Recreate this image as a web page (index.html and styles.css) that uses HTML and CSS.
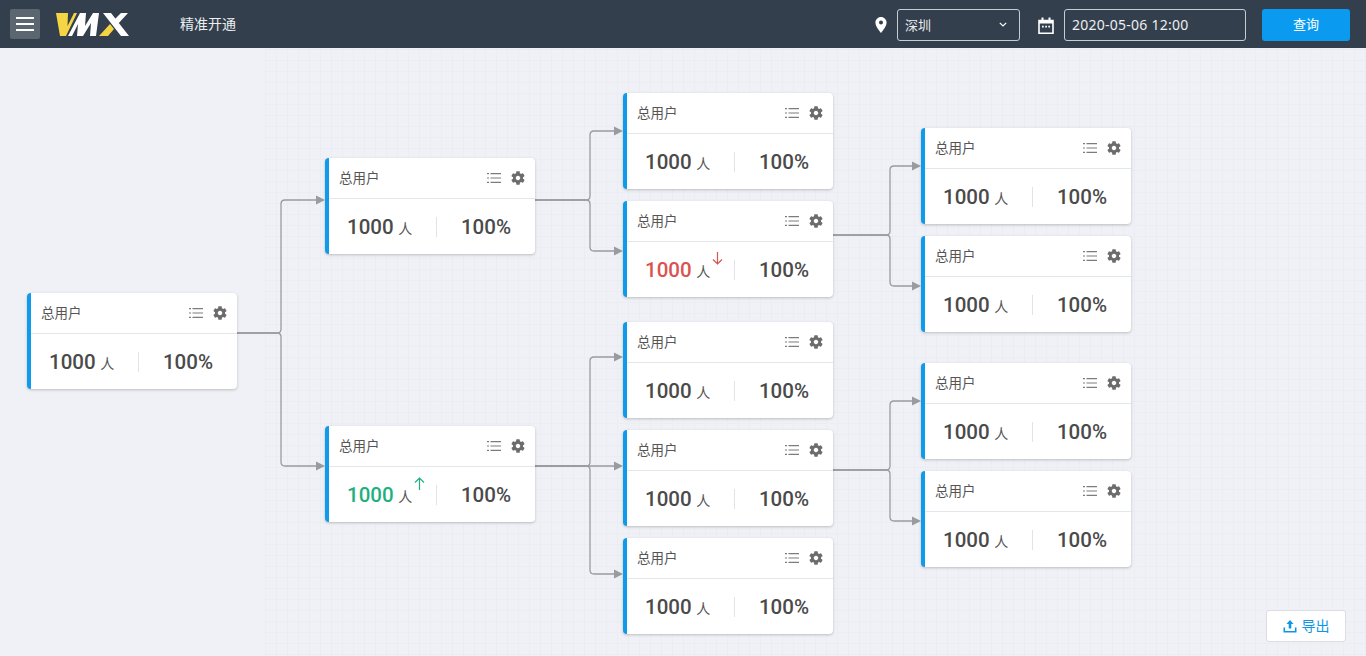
FILE: index.html
```html
<!DOCTYPE html>
<html lang="zh-CN">
<head>
    <meta charset="UTF-8">
    <meta name="viewport" content="width=device-width, initial-scale=1.0">
    <title>精准开通</title>
    <link rel="stylesheet" href="styles.css">
</head>
<body>
    <svg class="defs" width="0" height="0">
        <symbol id="i-list" viewBox="0 0 14 12">
            <path d="M0 1h2v1.2H0zM3.5 1H14v1.2H3.5zM0 5.400h2v1.200H0zM3.500 5.400H14v1.200H3.500zM0 9.800h2V11H0zM3.500 9.800H14V11H3.500z"/>
        </symbol>
        <symbol id="i-gear" viewBox="2 2 20 20">
            <path d="M19.14,12.94c0.04-0.3,0.06-0.61,0.06-0.94c0-0.32-0.02-0.64-0.07-0.94l2.03-1.58c0.18-0.14,0.23-0.41,0.12-0.61l-1.92-3.32c-0.12-0.22-0.37-0.29-0.59-0.22l-2.39,0.96c-0.5-0.38-1.03-0.7-1.62-0.94L14.4,2.81c-0.04-0.24-0.24-0.41-0.48-0.41h-3.84c-0.24,0-0.43,0.17-0.47,0.41L9.25,5.35C8.66,5.59,8.12,5.92,7.63,6.29L5.24,5.33c-0.22-0.08-0.47,0-0.59,0.22L2.74,8.87C2.62,9.08,2.66,9.34,2.86,9.48l2.03,1.58C4.84,11.36,4.8,11.69,4.8,12s0.02,0.64,0.07,0.94l-2.03,1.58c-0.18,0.14-0.23,0.41-0.12,0.61l1.92,3.32c0.12,0.22,0.37,0.29,0.59,0.22l2.39-0.96c0.5,0.38,1.03,0.7,1.62,0.94l0.36,2.54c0.05,0.24,0.24,0.41,0.48,0.41h3.84c0.24,0,0.44-0.17,0.47-0.41l0.36-2.54c0.59-0.24,1.13-0.56,1.62-0.94l2.39,0.96c0.22,0.08,0.47,0,0.59-0.22l1.92-3.32c0.12-0.22,0.07-0.47-0.12-0.61L19.14,12.94z M12,15.2c-1.76,0-3.2-1.44-3.2-3.2s1.44-3.2,3.2-3.2s3.2,1.44,3.2,3.2S13.76,15.2,12,15.2z"/>
        </symbol>
    </svg>

    <header class="topbar">
        <button class="menu-btn"><span></span><span></span><span></span></button>
        <svg class="logo" width="74" height="24" viewBox="56 12 74 24">
            <path fill="#f6d544" d="M56 13h12l-.5 13L74 13h3L66 36h-6z"/>
            <path fill="#fff" d="M68 36 80 13h6l-1 13 8-13h6l-3 23h-6l1-13-8 13h-6l1-12-6 12z"/>
            <path fill="#f6d544" d="M99 36l11-12 4 5-6 7z"/>
            <path fill="#fff" d="M103 13h8l18 23h-8zM113 21l8-8h7l-11 12z"/>
        </svg>
        <div class="page-title">精准开通</div>
        <div class="filters">
            <svg class="f-icon" width="12" height="16" viewBox="5 2 14 20"><path fill="#fff" d="M12 2C8.13 2 5 5.130 5 9c0 5.250 7 13 7 13s7-7.750 7-13c0-3.870-3.130-7-7-7zm0 9.500a2.500 2.500 0 0 1 0-5 2.500 2.500 0 0 1 0 5z"/></svg>
            <div class="field city">
                <span>深圳</span>
                <svg width="8" height="5" viewBox="0 0 8 5"><path fill="none" stroke="#fff" stroke-width="1.200" d="M.8.800 4 4 7.200.800"/></svg>
            </div>
            <svg class="f-icon cal" width="16" height="17" viewBox="0 0 16 17"><path fill="none" stroke="#fff" stroke-width="1.600" d="M1 3.500h14v12.700H1z"/><path fill="#fff" d="M1 3h14v3.500H1zM3.500 0.500h2v3h-2zM10.500 0.500h2v3h-2zM4 8.800h1.700v1.700H4zM7.200 8.800h1.700v1.700H7.200zM10.300 8.800H12v1.700h-1.700z"/></svg>
            <div class="field date">2020-05-06 12:00</div>
            <button class="query-btn">查询</button>
        </div>
    </header>

    <main class="canvas">
        <div class="grid-bg"></div>

        <svg class="wires" width="1366" height="608" viewBox="0 48 1366 608">
            <g fill="none" stroke="#9a9a9f" stroke-width="1.300">
                <path d="M237 333h40q4 0 4-4V204q0-4 4-4h32"/>
                <path d="M237 333h40q4 0 4 4V462q0 4 4 4h32"/>
                <path d="M535 200h51q4 0 4-4V135q0-4 4-4h21"/>
                <path d="M535 200h51q4 0 4 4V247q0 4 4 4h21"/>
                <path d="M535 466h51q4 0 4-4V361q0-4 4-4h21"/>
                <path d="M535 466h80"/>
                <path d="M535 466h51q4 0 4 4V570q0 4 4 4h21"/>
                <path d="M833 235h53q4 0 4-4V170q0-4 4-4h19"/>
                <path d="M833 235h53q4 0 4 4V282q0 4 4 4h19"/>
                <path d="M833 470h53q4 0 4-4V405q0-4 4-4h19"/>
                <path d="M833 470h53q4 0 4 4V517q0 4 4 4h19"/>
            </g>
            <g fill="#9a9a9f">
                <path d="M316 195.500l9 4.500-9 4.500z"/>
                <path d="M316 461.500l9 4.500-9 4.500z"/>
                <path d="M614 126.500l9 4.500-9 4.500z"/>
                <path d="M614 246.500l9 4.500-9 4.500z"/>
                <path d="M614 352.500l9 4.500-9 4.500z"/>
                <path d="M614 461.500l9 4.500-9 4.500z"/>
                <path d="M614 569.500l9 4.500-9 4.500z"/>
                <path d="M912 161.500l9 4.500-9 4.500z"/>
                <path d="M912 281.500l9 4.500-9 4.500z"/>
                <path d="M912 396.500l9 4.500-9 4.500z"/>
                <path d="M912 516.500l9 4.500-9 4.500z"/>
            </g>
        </svg>

        <div class="node n1">
            <div class="node-head"><span class="node-name">总用户</span><svg class="ic-list"><use href="#i-list"/></svg><svg class="ic-gear"><use href="#i-gear"/></svg></div>
            <div class="node-body"><div class="count"><b>1000</b> 人</div><div class="rate">100%</div></div>
        </div>
        <div class="node n2">
            <div class="node-head"><span class="node-name">总用户</span><svg class="ic-list"><use href="#i-list"/></svg><svg class="ic-gear"><use href="#i-gear"/></svg></div>
            <div class="node-body"><div class="count"><b>1000</b> 人</div><div class="rate">100%</div></div>
        </div>
        <div class="node n3">
            <div class="node-head"><span class="node-name">总用户</span><svg class="ic-list"><use href="#i-list"/></svg><svg class="ic-gear"><use href="#i-gear"/></svg></div>
            <div class="node-body"><div class="count up"><b>1000</b> 人<svg class="trend" width="11" height="13" viewBox="0 0 11 13"><path d="M5.500 13V1M1 5.500l4.500-4.500 4.500 4.500"/></svg></div><div class="rate">100%</div></div>
        </div>
        <div class="node n4">
            <div class="node-head"><span class="node-name">总用户</span><svg class="ic-list"><use href="#i-list"/></svg><svg class="ic-gear"><use href="#i-gear"/></svg></div>
            <div class="node-body"><div class="count"><b>1000</b> 人</div><div class="rate">100%</div></div>
        </div>
        <div class="node n5">
            <div class="node-head"><span class="node-name">总用户</span><svg class="ic-list"><use href="#i-list"/></svg><svg class="ic-gear"><use href="#i-gear"/></svg></div>
            <div class="node-body"><div class="count down"><b>1000</b> 人<svg class="trend" width="11" height="13" viewBox="0 0 11 13"><path d="M5.500 0V12M1 7.500l4.500 4.500 4.500-4.500"/></svg></div><div class="rate">100%</div></div>
        </div>
        <div class="node n6">
            <div class="node-head"><span class="node-name">总用户</span><svg class="ic-list"><use href="#i-list"/></svg><svg class="ic-gear"><use href="#i-gear"/></svg></div>
            <div class="node-body"><div class="count"><b>1000</b> 人</div><div class="rate">100%</div></div>
        </div>
        <div class="node n7">
            <div class="node-head"><span class="node-name">总用户</span><svg class="ic-list"><use href="#i-list"/></svg><svg class="ic-gear"><use href="#i-gear"/></svg></div>
            <div class="node-body"><div class="count"><b>1000</b> 人</div><div class="rate">100%</div></div>
        </div>
        <div class="node n8">
            <div class="node-head"><span class="node-name">总用户</span><svg class="ic-list"><use href="#i-list"/></svg><svg class="ic-gear"><use href="#i-gear"/></svg></div>
            <div class="node-body"><div class="count"><b>1000</b> 人</div><div class="rate">100%</div></div>
        </div>
        <div class="node n9">
            <div class="node-head"><span class="node-name">总用户</span><svg class="ic-list"><use href="#i-list"/></svg><svg class="ic-gear"><use href="#i-gear"/></svg></div>
            <div class="node-body"><div class="count"><b>1000</b> 人</div><div class="rate">100%</div></div>
        </div>
        <div class="node n10">
            <div class="node-head"><span class="node-name">总用户</span><svg class="ic-list"><use href="#i-list"/></svg><svg class="ic-gear"><use href="#i-gear"/></svg></div>
            <div class="node-body"><div class="count"><b>1000</b> 人</div><div class="rate">100%</div></div>
        </div>
        <div class="node n11">
            <div class="node-head"><span class="node-name">总用户</span><svg class="ic-list"><use href="#i-list"/></svg><svg class="ic-gear"><use href="#i-gear"/></svg></div>
            <div class="node-body"><div class="count"><b>1000</b> 人</div><div class="rate">100%</div></div>
        </div>
        <div class="node n12">
            <div class="node-head"><span class="node-name">总用户</span><svg class="ic-list"><use href="#i-list"/></svg><svg class="ic-gear"><use href="#i-gear"/></svg></div>
            <div class="node-body"><div class="count"><b>1000</b> 人</div><div class="rate">100%</div></div>
        </div>

        <button class="export-btn">
            <svg width="14" height="14" viewBox="0 0 14 14"><path fill="#0d96e6" d="M7 1l3.500 4H8.300v4.500H5.700V5H3.500zM0.500 8.500h1.600v3.400h9.800V8.500h1.600v5H0.500z"/></svg>
            <span>导出</span>
        </button>
    </main>
</body>
</html>
```

FILE: styles.css
```css
* {
    box-sizing: border-box;
}

html, body {
    margin: 0;
    height: 100%;
    overflow: hidden;
}

body {
    font-family: "Noto Sans", "Noto Sans CJK SC", sans-serif;
    background-color: #f0f1f6;
    color: #4a4a4a;
}

.defs {
    position: absolute;
}

/* top bar */
.topbar {
    display: flex;
    align-items: center;
    height: 48px;
    padding: 0 16px 0 10px;
    background-color: #333f4d;
    color: #fff;
}

.menu-btn {
    display: flex;
    flex-direction: column;
    justify-content: center;
    gap: 4px;
    width: 30px;
    height: 30px;
    padding: 0 6px;
    border: none;
    border-radius: 2px;
    background-color: #5c6670;
}

.menu-btn span {
    display: block;
    height: 2px;
    background-color: #fff;
}

.logo {
    margin-left: 16px;
}

.page-title {
    margin-left: 50px;
    padding-bottom: 2px;
    font-size: 14px;
    color: #eceef0;
}

.filters {
    display: flex;
    align-items: center;
    margin-left: auto;
    padding-top: 2px;
}

.f-icon {
    margin-right: 10px;
}

.f-icon.cal {
    margin-left: 18px;
    margin-right: 10px;
}

.field {
    display: flex;
    align-items: center;
    height: 32px;
    padding: 0 7px 2px;
    border: 1px solid #c9ccd0;
    border-radius: 3px;
    font-size: 14px;
    color: #eceef0;
}

.city {
    justify-content: space-between;
    width: 123px;
    padding-right: 12px;
    font-size: 13px;
}

.date {
    width: 182px;
    letter-spacing: 0.25px;
}

.query-btn {
    width: 88px;
    height: 32px;
    margin-left: 16px;
    padding: 0 0 3px;
    border: none;
    border-radius: 3px;
    background-color: #0a9bf0;
    color: #fff;
    font-family: inherit;
    font-size: 13px;
}

/* diagram */
.canvas {
    position: relative;
    height: 608px;
}

.grid-bg {
    position: absolute;
    top: 1px;
    left: 265px;
    right: 0;
    bottom: 0;
    background-image:
        linear-gradient(to right, #ecedf2 1px, transparent 1px),
        linear-gradient(to bottom, #ecedf2 1px, transparent 1px);
    background-size: 11px 11px;
}

.wires {
    position: absolute;
    top: 0;
    left: 0;
}

.node {
    position: absolute;
    width: 210px;
    height: 96px;
    border-left: 4px solid #0f9beb;
    border-radius: 4px;
    background-color: #fff;
    box-shadow: 0 1px 3px rgba(0, 0, 0, 0.22);
}

.n1 { left: 27px; top: 245px; }
.n2 { left: 325px; top: 110px; }
.n3 { left: 325px; top: 378px; }
.n4 { left: 623px; top: 45px; }
.n5 { left: 623px; top: 153px; }
.n6 { left: 623px; top: 274px; }
.n7 { left: 623px; top: 382px; }
.n8 { left: 623px; top: 490px; }
.n9 { left: 921px; top: 80px; }
.n10 { left: 921px; top: 188px; }
.n11 { left: 921px; top: 315px; }
.n12 { left: 921px; top: 423px; }

.node-head {
    display: flex;
    align-items: center;
    height: 41px;
    padding: 0 10px;
    border-bottom: 1px solid #e4e6ea;
}

.node-name {
    flex: 1;
    padding-bottom: 2px;
    font-size: 13.5px;
    color: #555;
}

.ic-list {
    width: 14px;
    height: 12px;
    fill: #7c7c7c;
}

.ic-gear {
    width: 14px;
    height: 14px;
    margin-left: 10px;
    fill: #6c6c6c;
}

.node-body {
    display: flex;
    align-items: center;
    height: 55px;
}

.count {
    position: relative;
    width: 108px;
    height: 20px;
    padding-left: 18px;
    border-right: 1px solid #e2e3e6;
    font-size: 14px;
    line-height: 20px;
    color: #555;
}

.count b {
    margin-right: 1px;
    font-family: Roboto, sans-serif;
    font-size: 20.5px;
    font-weight: 500;
    color: #4a4a4a;
}

.count.up b {
    color: #1fb07e;
}

.count.down b {
    color: #d9534f;
}

.trend {
    position: absolute;
    left: 85px;
    top: -8px;
    fill: none;
    stroke-width: 1.2;
}

.up .trend {
    stroke: #1fb07e;
}

.down .trend {
    stroke: #d9534f;
}

.rate {
    flex: 1;
    text-align: center;
    font-family: Roboto, sans-serif;
    font-size: 20.5px;
    font-weight: 500;
    color: #4a4a4a;
}

.export-btn {
    position: absolute;
    right: 20px;
    bottom: 14px;
    display: flex;
    align-items: center;
    justify-content: center;
    gap: 5px;
    width: 80px;
    height: 32px;
    border: 1px solid #dcdde1;
    border-radius: 3px;
    background-color: #fff;
    color: #0d96e6;
    font-family: inherit;
    font-size: 14px;
}

.export-btn span {
    margin-bottom: 2px;
}
```
